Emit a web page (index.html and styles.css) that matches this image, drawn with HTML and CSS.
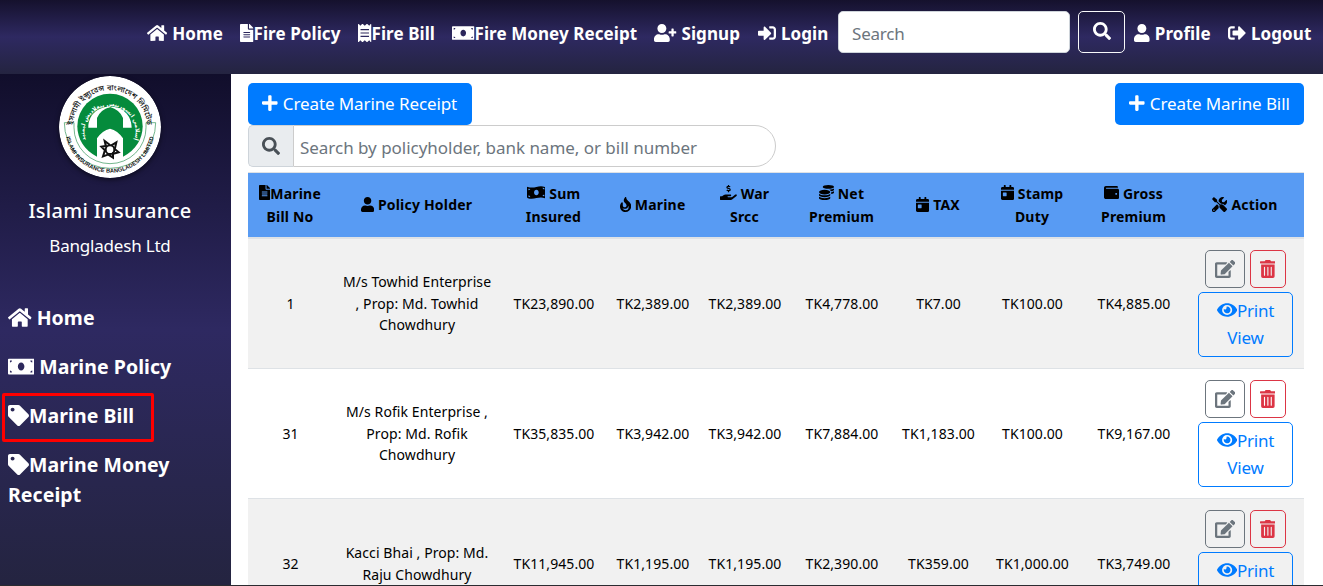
FILE: index.html
```html
<!DOCTYPE html>
<html lang="en">
<head>
<meta charset="utf-8">
<title>Marine Bill</title>
<link rel="stylesheet" href="styles.css">
</head>
<body>
<svg class="sprite" aria-hidden="true">
  <symbol id="home" viewBox="0 0 576 512"><path d="M280.37 148.26L96 300.11V464a16 16 0 0 0 16 16l112.06-.29a16 16 0 0 0 15.92-16V368a16 16 0 0 1 16-16h64a16 16 0 0 1 16 16v95.64a16 16 0 0 0 16 16.05L464 480a16 16 0 0 0 16-16V300L295.67 148.26a12.19 12.19 0 0 0-15.3 0zM571.6 251.47L488 182.56V44.05a12 12 0 0 0-12-12h-56a12 12 0 0 0-12 12v72.61L318.47 43a48 48 0 0 0-61 0L4.34 251.47a12 12 0 0 0-1.6 16.9l25.5 31A12 12 0 0 0 45.15 301l235.22-193.74a12.19 12.19 0 0 1 15.3 0L530.9 301a12 12 0 0 0 16.9-1.6l25.5-31a12 12 0 0 0-1.7-16.93z"/></symbol>
  <symbol id="file" viewBox="0 0 384 512"><path d="M224 136V0H24C10.7 0 0 10.7 0 24v464c0 13.3 10.7 24 24 24h336c13.3 0 24-10.7 24-24V160H248c-13.2 0-24-10.8-24-24zm64 236c0 6.6-5.4 12-12 12H108c-6.6 0-12-5.4-12-12v-8c0-6.6 5.4-12 12-12h168c6.6 0 12 5.4 12 12v8zm0-64c0 6.6-5.4 12-12 12H108c-6.6 0-12-5.4-12-12v-8c0-6.6 5.4-12 12-12h168c6.6 0 12 5.4 12 12v8zm0-72v8c0 6.6-5.4 12-12 12H108c-6.6 0-12-5.4-12-12v-8c0-6.6 5.4-12 12-12h168c6.6 0 12 5.4 12 12zm96-114.1v6.1H256V0h6.1c6.4 0 12.5 2.5 17 7l97.9 98c4.5 4.5 7 10.6 7 16.9z"/></symbol>
  <symbol id="receipt" viewBox="0 0 384 512"><path fill-rule="evenodd" d="M358.4 3.2L320 48 265.6 3.2a15.9 15.9 0 0 0-19.2 0L192 48 137.6 3.2a15.9 15.9 0 0 0-19.2 0L64 48 25.6 3.2C15-4.7 0 2.8 0 16v480c0 13.2 15 20.7 25.6 12.8L64 464l54.4 44.8a15.9 15.9 0 0 0 19.2 0L192 464l54.4 44.8a15.9 15.9 0 0 0 19.2 0L320 464l38.4 44.8c10.5 7.9 25.6.4 25.6-12.8V16c0-13.2-15-20.7-25.6-12.8zM72 144h240v32H72zM72 240h240v32H72zM72 336h240v32H72z"/></symbol>
  <symbol id="money" viewBox="0 0 640 512"><path fill-rule="evenodd" d="M24 64h592a24 24 0 0 1 24 24v336a24 24 0 0 1-24 24H24a24 24 0 0 1-24-24V88a24 24 0 0 1 24-24zM320 160c-44 0-80 43-80 96s36 96 80 96 80-43 80-96-36-96-80-96zM48 112v48a48 48 0 0 0 48-48zM592 112h-48a48 48 0 0 0 48 48zM48 400h48a48 48 0 0 0-48-48zM592 400v-48a48 48 0 0 0-48 48z"/></symbol>
  <symbol id="wavy" viewBox="0 0 640 512"><path fill-rule="evenodd" d="M30 64C125 102 222 92 320 66 412 42 510 32 610 64q30 10 30 38v330q0 30-30 18C515 410 418 420 320 446 228 470 130 480 30 450Q0 440 0 410V82q0-30 30-18zM320 160c-44 0-80 43-80 96s36 96 80 96 80-43 80-96-36-96-80-96zM48 128v50c32 0 58-20 62-40zM592 104l-62-8c2 30 26 54 62 54zM48 404l62 10c0-30-24-54-62-54zM592 388v-54c-30 0-56 16-62 42z"/></symbol>
  <symbol id="user" viewBox="0 0 448 512"><path d="M224 256c70.7 0 128-57.3 128-128S294.7 0 224 0 96 57.3 96 128s57.3 128 128 128zm89.6 32h-16.7c-22.2 10.2-46.9 16-72.9 16s-50.6-5.8-72.9-16h-16.7C60.2 288 0 348.2 0 422.4V464c0 26.5 21.5 48 48 48h352c26.5 0 48-21.5 48-48v-41.6c0-74.2-60.2-134.4-134.4-134.4z"/></symbol>
  <symbol id="signup" viewBox="0 0 640 512"><path d="M624 208h-64v-64c0-8.8-7.2-16-16-16h-32c-8.8 0-16 7.2-16 16v64h-64c-8.8 0-16 7.2-16 16v32c0 8.8 7.2 16 16 16h64v64c0 8.8 7.2 16 16 16h32c8.8 0 16-7.2 16-16v-64h64c8.8 0 16-7.2 16-16v-32c0-8.8-7.2-16-16-16zM224 256c70.7 0 128-57.3 128-128S294.7 0 224 0 96 57.3 96 128s57.3 128 128 128zm89.6 32h-16.7c-22.2 10.2-46.9 16-72.9 16s-50.6-5.8-72.9-16h-16.7C60.2 288 0 348.2 0 422.4V464c0 26.5 21.5 48 48 48h352c26.5 0 48-21.5 48-48v-41.6c0-74.2-60.2-134.4-134.4-134.4z"/></symbol>
  <symbol id="login" viewBox="0 0 512 512"><path d="M416 448h-84c-6.6 0-12-5.4-12-12v-40c0-6.6 5.4-12 12-12h84c17.7 0 32-14.3 32-32V160c0-17.7-14.3-32-32-32h-84c-6.6 0-12-5.4-12-12V76c0-6.6 5.4-12 12-12h84c53 0 96 43 96 96v192c0 53-43 96-96 96zm-47-201L201 79c-15-15-41-4.5-41 17v96H24c-13.3 0-24 10.7-24 24v96c0 13.3 10.7 24 24 24h136v96c0 21.5 26 32 41 17l168-168c9.3-9.4 9.3-24.6 0-34z"/></symbol>
  <symbol id="logout" viewBox="0 0 512 512"><path d="M497 273L329 441c-15 15-41 4.5-41-17v-96H152c-13.3 0-24-10.7-24-24v-96c0-13.3 10.7-24 24-24h136V88c0-21.4 25.9-32 41-17l168 168c9.3 9.4 9.3 24.6 0 34zM192 436v-40c0-6.6-5.4-12-12-12H96c-17.7 0-32-14.3-32-32V160c0-17.7 14.3-32 32-32h84c6.6 0 12-5.4 12-12V76c0-6.6-5.4-12-12-12H96c-53 0-96 43-96 96v192c0 53 43 96 96 96h84c6.6 0 12-5.4 12-12z"/></symbol>
  <symbol id="search" viewBox="0 0 512 512"><path d="M505 442.7L405.3 343c-4.5-4.5-10.6-7-17-7H372c27.6-35.3 44-79.7 44-128C416 93.1 322.9 0 208 0S0 93.1 0 208s93.1 208 208 208c48.3 0 92.7-16.4 128-44v16.3c0 6.4 2.5 12.5 7 17l99.7 99.7c9.4 9.4 24.6 9.4 33.9 0l28.3-28.3c9.4-9.4 9.4-24.6.1-34zM208 336c-70.7 0-128-57.2-128-128 0-70.7 57.2-128 128-128 70.7 0 128 57.2 128 128 0 70.7-57.2 128-128 128z"/></symbol>
  <symbol id="tag" viewBox="0 0 512 512"><path d="M0 252.118V48C0 21.49 21.49 0 48 0h204.118a48 48 0 0 1 33.941 14.059l211.882 211.882c18.745 18.745 18.745 49.137 0 67.882L293.823 497.941c-18.745 18.745-49.137 18.745-67.882 0L14.059 286.059A48 48 0 0 1 0 252.118zM112 64c-26.51 0-48 21.49-48 48s21.49 48 48 48 48-21.49 48-48-21.49-48-48-48z"/></symbol>
  <symbol id="plus" viewBox="0 0 448 512"><path d="M416 208H272V64c0-17.67-14.33-32-32-32h-32c-17.67 0-32 14.33-32 32v144H32c-17.67 0-32 14.33-32 32v32c0 17.67 14.33 32 32 32h144v144c0 17.67 14.33 32 32 32h32c17.67 0 32-14.33 32-32V304h144c17.67 0 32-14.33 32-32v-32c0-17.67-14.33-32-32-32z"/></symbol>
  <symbol id="eye" viewBox="0 0 576 512"><path d="M572.52 241.4C518.29 135.59 410.93 64 288 64S57.68 135.64 3.48 241.41a32.35 32.35 0 0 0 0 29.19C57.71 376.41 165.07 448 288 448s230.32-71.64 284.52-177.41a32.35 32.35 0 0 0 0-29.19zM288 400a144 144 0 1 1 144-144 143.93 143.93 0 0 1-144 144zm0-240a95.31 95.31 0 0 0-25.31 3.79 47.85 47.85 0 0 1-66.9 66.9A95.78 95.78 0 1 0 288 160z"/></symbol>
  <symbol id="edit" viewBox="0 0 576 512"><path d="M402.6 83.2l90.2 90.2c3.8 3.8 3.8 10 0 13.8L274.4 405.6l-92.8 10.3c-12.4 1.4-22.9-9.1-21.5-21.5l10.3-92.8L388.8 83.2c3.8-3.8 10-3.8 13.8 0zm162-22.9l-48.8-48.8c-15.2-15.2-39.9-15.2-55.2 0l-35.4 35.4c-3.8 3.8-3.8 10 0 13.8l90.2 90.2c3.8 3.8 10 3.8 13.8 0l35.4-35.4c15.2-15.3 15.2-40 0-55.2zM384 346.2V448H64V128h229.8c3.2 0 6.2-1.3 8.5-3.5l40-40c7.6-7.6 2.2-20.5-8.5-20.5H48C21.5 64 0 85.5 0 112v352c0 26.5 21.5 48 48 48h352c26.5 0 48-21.5 48-48V306.2c0-10.7-12.9-16-20.5-8.5l-40 40c-2.2 2.3-3.5 5.3-3.5 8.5z"/></symbol>
  <symbol id="trash" viewBox="0 0 448 512"><path d="M32 464a48 48 0 0 0 48 48h288a48 48 0 0 0 48-48V128H32zm272-256a16 16 0 0 1 32 0v224a16 16 0 0 1-32 0zm-96 0a16 16 0 0 1 32 0v224a16 16 0 0 1-32 0zm-96 0a16 16 0 0 1 32 0v224a16 16 0 0 1-32 0zM432 32H312l-9.4-18.7A24 24 0 0 0 281.1 0H166.8a23.72 23.72 0 0 0-21.4 13.3L136 32H16A16 16 0 0 0 0 48v32a16 16 0 0 0 16 16h416a16 16 0 0 0 16-16V48a16 16 0 0 0-16-16z"/></symbol>
  <symbol id="calendar" viewBox="0 0 448 512"><path d="M0 464c0 26.5 21.5 48 48 48h352c26.5 0 48-21.5 48-48V192H0v272zm64-192c0-8.8 7.2-16 16-16h96c8.8 0 16 7.2 16 16v96c0 8.8-7.2 16-16 16H80c-8.8 0-16-7.2-16-16v-96zM400 64h-48V16c0-8.8-7.2-16-16-16h-32c-8.8 0-16 7.2-16 16v48H160V16c0-8.8-7.2-16-16-16h-32c-8.8 0-16 7.2-16 16v48H48C21.5 64 0 85.5 0 112v48h448v-48c0-26.5-21.5-48-48-48z"/></symbol>
  <symbol id="wallet" viewBox="0 0 512 512"><path d="M461.2 128H80c-8.84 0-16-7.16-16-16s7.16-16 16-16h384c8.84 0 16-7.16 16-16 0-26.51-21.49-48-48-48H64C28.65 32 0 60.65 0 96v320c0 35.35 28.65 64 64 64h397.2c28.02 0 50.8-21.53 50.8-48V176c0-26.47-22.78-48-50.8-48zM416 336c-17.67 0-32-14.33-32-32s14.33-32 32-32 32 14.33 32 32-14.33 32-32 32z"/></symbol>
  <symbol id="fire" viewBox="0 0 384 512"><path fill-rule="evenodd" d="M216 24c0-24-30-33-43-14C48 191 224 200 224 288c0 36-29 64-64 64s-64-29-64-65v-85c0-22-27-32-42-16C28 213 0 261 0 320c0 106 86 192 192 192s192-86 192-192C384 150 216 127 216 24zM192 448c-50 0-92-26-106-62 70 40 190 20 194-90 30 70 10 152-88 152z"/></symbol>
  <symbol id="hand" viewBox="0 0 576 512"><path d="M565 328c-12-11-30-10-43 0l-93 74c-11 9-25 14-40 14H272c-9 0-16-7-16-16s7-16 16-16h78c16 0 31-11 33-27 4-20-12-37-31-37H192c-27 0-53 9-74 26l-46 38H16c-9 0-16 7-16 16v96c0 9 7 16 16 16h357c15 0 29-5 40-14l151-121c15-12 16-36 1-49z"/><path fill="none" stroke="currentColor" stroke-width="42" d="M346 66c-24-24-110-26-110 16 0 52 112 18 112 76 0 44-92 42-118 14M290 0v38M290 198v46"/></symbol>
  <symbol id="coins" viewBox="0 0 512 512"><ellipse cx="320" cy="64" rx="192" ry="64"/><path d="M0 405c41 29 111 43 192 43s151-14 192-43v43c0 35-86 64-192 64S0 483 0 448zM0 300c41 35 111 52 192 52s151-17 192-52v52c0 35-86 64-192 64S0 387 0 352zM416 311c57-11 96-32 96-55v-43c-23 16-57 27-96 34zM192 160C86 160 0 196 0 240s86 80 192 80 192-36 192-80-86-80-192-80zM412 215c60-11 100-31 100-55v-43c-36 25-94 39-163 42 32 13 55 31 63 56z"/></symbol>
  <symbol id="tools" viewBox="0 0 512 512"><path d="M502 395L384 276c-27-27-68-32-100-16L176 152V96L64 0 0 64l96 112h56l108 108c-16 32-11 73 16 100l118 118c15 14 38 14 52 0l56-56c14-14 14-37 0-51z"/><path d="M332 228c30 0 58 11 79 32l20 20c71-31 96-104 76-171-2-9-13-12-20-5l-74 74-68-11-11-68 74-74c7-7 4-17-5-20-49-12-102 2-139 39-29 29-43 67-43 105l84 84 27-5zM228 305l-57-57L19 400a66 66 0 1 0 93 93l120-120c-9-21-11-45-4-68zM64 472a24 24 0 1 1 0-48 24 24 0 0 1 0 48z"/></symbol>
</svg>

<header class="topbar">
  <nav class="topnav">
    <a class="n-home"><svg class="i w576"><use href="#home"/></svg>Home</a>
    <a class="n-policy"><svg class="i w384"><use href="#file"/></svg>Fire Policy</a>
    <a class="n-bill"><svg class="i w384"><use href="#receipt"/></svg>Fire Bill</a>
    <a class="n-money"><svg class="i w640"><use href="#money"/></svg>Fire Money Receipt</a>
    <a class="n-signup"><svg class="i w640"><use href="#signup"/></svg>Signup</a>
    <a class="n-login"><svg class="i w512"><use href="#login"/></svg>Login</a>
  </nav>
  <form class="topsearch">
    <input class="field" placeholder="Search">
    <button class="lens" type="button"><svg class="i w512"><use href="#search"/></svg></button>
  </form>
  <nav class="topnav">
    <a class="n-profile"><svg class="i w448"><use href="#user"/></svg>Profile</a>
    <a class="n-logout"><svg class="i w512"><use href="#logout"/></svg>Logout</a>
  </nav>
</header>

<div class="layout">
  <aside class="sidebar">
    <svg class="logo" viewBox="0 0 306 306">
      <defs>
        <path id="arcTop" d="M44 175A111 111 0 1 1 262 175"/>
        <path id="arcBottom" d="M20 140A134 134 0 1 0 286 140"/>
        <path id="arcMid" d="M96 219A77 77 0 1 1 210 219"/>
      </defs>
      <circle cx="153" cy="153" r="153" fill="#fff"/>
      <path d="M45 140H16A137 137 0 0 0 290 140H261" fill="none" stroke="#2f9355" stroke-width="2"/>
      <path d="M45 140V155A108 108 0 0 0 261 155V140" fill="none" stroke="#2f9355" stroke-width="2"/>
      <path d="M114 242C76 224 55 188 55 151a98 98 0 0 1 196 0C251 188 230 224 192 242z" fill="#058b3c"/>
      <path d="M114 252V155C114 155 92 155 88 155C88 116 116 92 153 92S218 116 218 155H192V252z" fill="#fff"/>
      <path d="M114 187V126Q124 101 153 93 182 101 192 126V187Q176 163 153 158 130 163 114 187z" fill="#058b3c"/>
      <g fill="none" stroke="#111" stroke-width="6"><circle cx="153" cy="221" r="13"/><path d="M141 213L137 195 153 207M157 208L172 199 168 217M166 218L179 229 163 233M162 229L162 245 148 236M149 235L132 241 137 225M140 225L127 212 144 209"/></g>
      <text class="logo-bn"><textPath href="#arcTop" startOffset="50%">ইসলামী ইন্স্যুরেন্স বাংলাদেশ লিমিটেড</textPath></text>
      <text class="logo-en"><textPath href="#arcBottom" startOffset="50%">ISLAMI INSURANCE BANGLADESH LIMITED</textPath></text>
      <text class="logo-ar"><textPath href="#arcMid" startOffset="50%">إسلامي انسورينس بنغلاديش ليمتيد</textPath></text>
    </svg>
    <h1 class="brand">Islami Insurance</h1>
    <p class="country">Bangladesh Ltd</p>
    <ul class="menu">
      <li class="m-home"><svg class="i w576"><use href="#home"/></svg>Home</li>
      <li class="m-policy"><svg class="i w640"><use href="#money"/></svg>Marine Policy</li>
      <li class="active"><svg class="i w512"><use href="#tag"/></svg>Marine Bill</li>
      <li><svg class="i w512"><use href="#tag"/></svg>Marine Money Receipt</li>
    </ul>
  </aside>

  <main class="content">
    <div class="actions">
      <a class="btn create-receipt"><svg class="i w448"><use href="#plus"/></svg>Create Marine Receipt</a>
      <a class="btn create-bill"><svg class="i w448"><use href="#plus"/></svg>Create Marine Bill</a>
    </div>
    <div class="filter">
      <span class="addon"><svg class="i w512"><use href="#search"/></svg></span>
      <input class="filter-field" placeholder="Search by policyholder, bank name, or bill number">
    </div>
    <table class="bills">
      <colgroup><col class="c1"><col class="c2"><col class="c3"><col class="c4"><col class="c5"><col class="c6"><col class="c7"><col class="c8"><col class="c9"><col class="c10"></colgroup>
      <thead>
        <tr>
          <th><svg class="i w384 tight"><use href="#file"/></svg>Marine<br>Bill No</th>
          <th><svg class="i w448"><use href="#user"/></svg>Policy Holder</th>
          <th><svg class="i w640"><use href="#wavy"/></svg>Sum<br>Insured</th>
          <th><svg class="i w384"><use href="#fire"/></svg>Marine</th>
          <th><svg class="i w576"><use href="#hand"/></svg>War<br>Srcc</th>
          <th><svg class="i w512"><use href="#coins"/></svg>Net<br>Premium</th>
          <th><svg class="i w448"><use href="#calendar"/></svg>TAX</th>
          <th><svg class="i w448"><use href="#calendar"/></svg>Stamp<br>Duty</th>
          <th><svg class="i w512"><use href="#wallet"/></svg>Gross<br>Premium</th>
          <th><svg class="i w512"><use href="#tools"/></svg>Action</th>
        </tr>
      </thead>
      <tbody>
        <tr>
          <td>1</td><td>M/s Towhid Enterprise<br>, Prop: Md. Towhid<br>Chowdhury</td><td>TK23,890.00</td><td>TK2,389.00</td><td>TK2,389.00</td><td>TK4,778.00</td><td>TK7.00</td><td>TK100.00</td><td>TK4,885.00</td>
          <td class="ops"><div class="pair"><a class="op edit"><svg class="i w576"><use href="#edit"/></svg></a><a class="op del"><svg class="i w448"><use href="#trash"/></svg></a></div><a class="op print"><svg class="i w576"><use href="#eye"/></svg>Print<br>View</a></td>
        </tr>
        <tr>
          <td>31</td><td>M/s Rofik Enterprise ,<br>Prop: Md. Rofik<br>Chowdhury</td><td>TK35,835.00</td><td>TK3,942.00</td><td>TK3,942.00</td><td>TK7,884.00</td><td>TK1,183.00</td><td>TK100.00</td><td>TK9,167.00</td>
          <td class="ops"><div class="pair"><a class="op edit"><svg class="i w576"><use href="#edit"/></svg></a><a class="op del"><svg class="i w448"><use href="#trash"/></svg></a></div><a class="op print"><svg class="i w576"><use href="#eye"/></svg>Print<br>View</a></td>
        </tr>
        <tr>
          <td>32</td><td>Kacci Bhai , Prop: Md.<br>Raju Chowdhury</td><td>TK11,945.00</td><td>TK1,195.00</td><td>TK1,195.00</td><td>TK2,390.00</td><td>TK359.00</td><td>TK1,000.00</td><td>TK3,749.00</td>
          <td class="ops"><div class="pair"><a class="op edit"><svg class="i w576"><use href="#edit"/></svg></a><a class="op del"><svg class="i w448"><use href="#trash"/></svg></a></div><a class="op print"><svg class="i w576"><use href="#eye"/></svg>Print<br>View</a></td>
        </tr>
      </tbody>
    </table>
  </main>
</div>
</body>
</html>
```
FILE: styles.css
```css
*, *::after { box-sizing: border-box; }
html, body { height: 100%; }
body {
  margin: 0;
  overflow: hidden;
  background: #fff;
  color: #000;
  font: 17px/27px "Noto Sans", "Open Sans", sans-serif;
}
.sprite { position: absolute; width: 0; height: 0; }
.i { height: 1em; fill: currentColor; vertical-align: -0.125em; flex: none; }
.w384 { width: .75em; }
.w448 { width: .875em; }
.w512 { width: 1em; }
.w576 { width: 1.125em; }
.w640 { width: 1.25em; }

/* Top bar */
.topbar {
  display: flex;
  align-items: flex-start;
  justify-content: flex-end;
  height: 74px;
  padding: 11px 11px 0 0;
  background: linear-gradient(#15112d 0%, #2e2961 50%, #242440 100%);
}
.topnav { display: flex; gap: 17px; height: 42px; align-items: center; padding-top: 2px; }
.topnav a {
  display: flex;
  align-items: center;
  gap: 5px;
  color: #fff;
  font-weight: 700;
  white-space: nowrap;
  letter-spacing: .08px;
}
.topnav .i { font-size: 18px; }
.topnav .n-policy, .topnav .n-bill, .topnav .n-money { gap: 0; }
.n-home { width: 76px; }
.n-policy { width: 101px; }
.n-bill { width: 77px; }
.n-money { width: 185px; }
.n-signup { width: 87px; }
.n-login { width: 71px; }
.n-profile { width: 77px; }
.n-logout { width: 84px; }
.topsearch { display: flex; gap: 8px; margin: 0 9px; }
.field {
  width: 232px;
  height: 42px;
  padding: 3px 13px 0;
  border: 1px solid #ced4da;
  border-radius: 5px;
  background: #fff;
  font: inherit;
  letter-spacing: -.2px;
}
input::placeholder { color: #6c757d; opacity: 1; }
.lens {
  width: 47px;
  height: 42px;
  padding: 0;
  border: 1px solid #f8f9fa;
  border-radius: 5px;
  background: none;
  color: #fff;
  font-size: 18px;
}

/* Sidebar */
.layout {
  display: flex;
  height: calc(100% - 74px);
  overflow: hidden;
  border-bottom: 1px solid #2b2b30;
}
.sidebar {
  position: relative;
  flex: none;
  width: 231px;
  background: linear-gradient(#110e2b 0%, #2e2961 50%, #242440 100%);
  color: #fff;
}
.logo {
  display: block;
  width: 102px;
  height: 102px;
  margin: 2px 0 0 59px;
  border-radius: 50%;
  box-shadow: 0 2px 5px rgba(0, 0, 0, .5);
}
.logo text { text-anchor: middle; }
.logo-bn { font: 500 23px "Noto Sans Bengali", "Noto Sans", sans-serif; fill: #111; }
.logo-en { font: 700 17px "Liberation Sans", sans-serif; letter-spacing: .2px; fill: #111; }
.logo-ar { font: 700 17px "DejaVu Sans", sans-serif; fill: #fff; }
.brand {
  width: 220px;
  margin: 18px 0 0;
  font-size: 20px;
  font-weight: 500;
  line-height: 30px;
  text-align: center;
  letter-spacing: .3px;
}
.country {
  width: 220px;
  margin: 6px 0 0;
  line-height: 27px;
  text-align: center;
  letter-spacing: -.2px;
}
.menu {
  margin: 44px 0 0;
  padding: 0 50px 0 8px;
  list-style: none;
  font-size: 19.5px;
  font-weight: 700;
  line-height: 30px;
}
.menu li { margin-bottom: 19px; letter-spacing: .07px; }
.menu .i { font-size: 21px; }
.m-home .i, .m-policy .i { margin-right: 5px; }
.active { position: relative; }
.active::after {
  content: "";
  position: absolute;
  left: -6px;
  top: -8px;
  width: 152px;
  height: 49px;
  border: 3px solid #f00;
  border-radius: 2px;
}

/* Content */
.content { flex: none; width: 1073px; padding: 9px 0 0 17px; }
.actions { display: flex; justify-content: space-between; }
.btn {
  display: flex;
  align-items: center;
  gap: 5px;
  height: 42px;
  padding: 0 0 2px 14px;
  border-radius: 5px;
  background: #007bff;
  color: #fff;
  white-space: nowrap;
  letter-spacing: -.1px;
}
.btn .i { font-size: 18px; }
.create-receipt { width: 224px; }
.create-bill { width: 189px; }
.filter { display: flex; width: 528px; height: 42px; }
.addon {
  display: flex;
  align-items: center;
  justify-content: center;
  width: 45px;
  border: 1px solid #ced4da;
  border-right: 0;
  border-radius: 5px 0 0 5px;
  background: #e9ecef;
  color: #495057;
  font-size: 18px;
}
.filter-field {
  width: 483px;
  padding: 3px 6px 0;
  border: 1px solid #ccc;
  border-radius: 0 21px 21px 0;
  font: inherit;
  letter-spacing: -.03px;
}

/* Bills table */
.bills {
  width: 1056px;
  margin-top: 5px;
  border-spacing: 0;
  table-layout: fixed;
  text-align: center;
  font-size: 14px;
  letter-spacing: .08px;
  line-height: 21.6px;
}
.c1 { width: 84px; }
.c2 { width: 169px; }
.c3 { width: 105px; }
.c4 { width: 93px; }
.c5 { width: 91px; }
.c6 { width: 103px; }
.c7 { width: 90px; }
.c8 { width: 98px; }
.c9 { width: 105px; }
.c10 { width: 118px; }
th {
  height: 67px;
  padding: 0 0 1px;
  border-top: 1px solid #dee2e6;
  border-bottom: 2px solid #dee2e6;
  background: #589bf3;
  line-height: 23px;
  letter-spacing: .2px;
  white-space: nowrap;
}
th .i { font-size: 15px; margin-right: 4px; }
th .tight { margin-right: 0; }
td { height: 129px; padding: 0 0 0 1px; white-space: nowrap; }
tbody tr + tr td { height: 130px; border-top: 1px solid #dee2e6; }
tbody tr:nth-child(odd) td { background: #f1f1f1; }
td.ops { vertical-align: top; padding: 11px 0 0; font-size: 17px; line-height: 27px; letter-spacing: -.2px; }
.pair { display: flex; justify-content: center; gap: 5px; margin-bottom: 4px; }
.op {
  display: flex;
  align-items: center;
  justify-content: center;
  height: 38px;
  border: 1px solid;
  border-radius: 5px;
}
.edit { width: 40px; padding-left: 1px; color: #6c757d; }
.del { width: 36px; color: #dc3545; }
.edit .i, .del .i { font-size: 18px; }
.print { display: block; width: 95px; height: 65px; margin: 0 auto; padding: 4px 0 0 1px; color: #007bff; }
.print .i { font-size: 18px; }
```
